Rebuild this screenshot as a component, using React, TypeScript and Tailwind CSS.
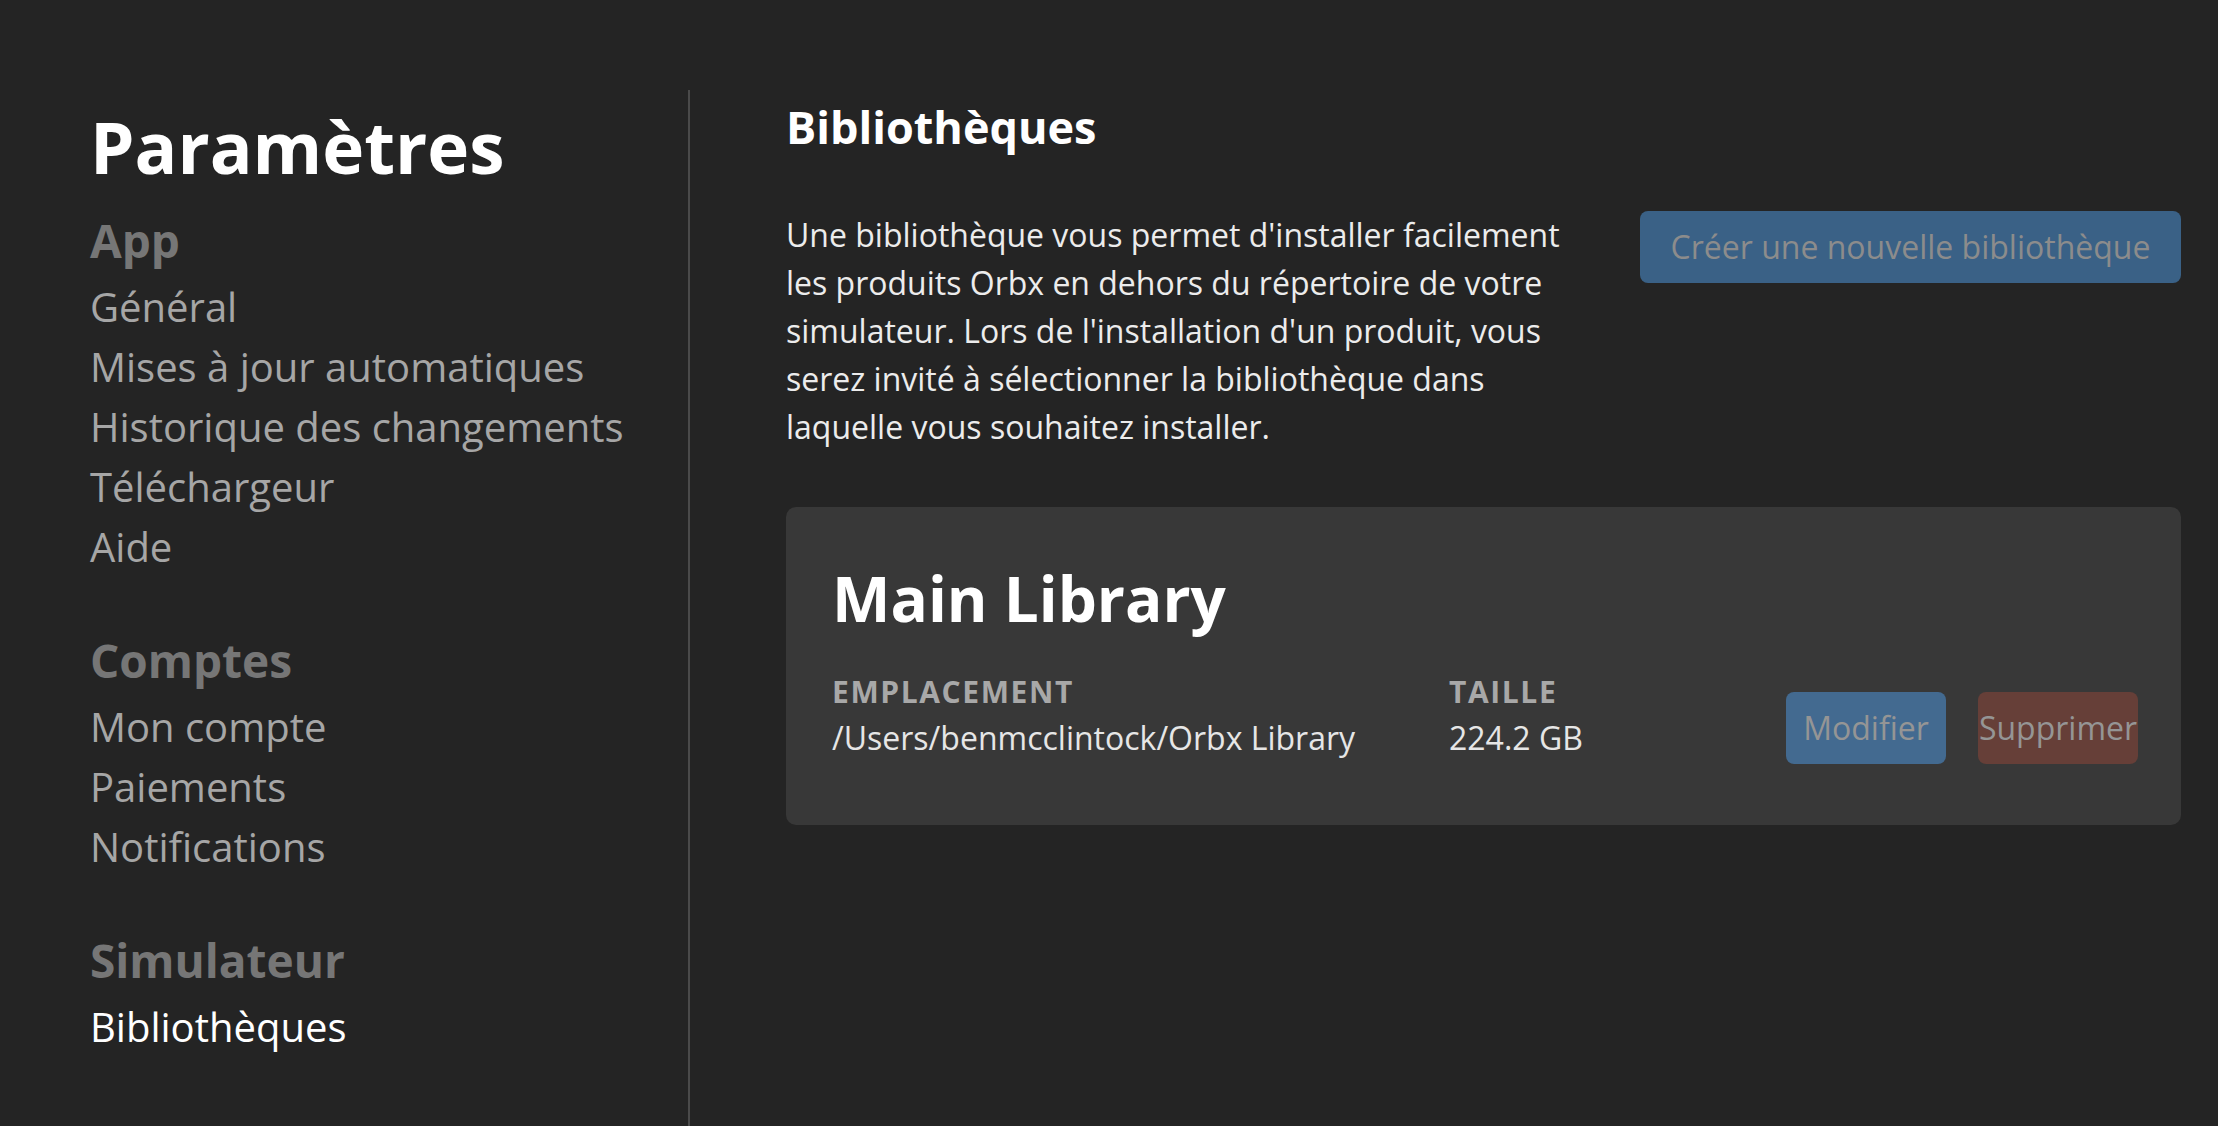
import React from "react";

const Section = ({ title, items, active, first }: { title: string; items: string[]; active?: string; first?: boolean }) => (
  <div className={first ? "mt-[33px]" : "mt-[59px]"}>
    <div className="text-[46px] leading-[48px] font-bold text-[#767676] mb-[13px]">{title}</div>
    {items.map((it) => (
      <div key={it} className={`text-[40px] leading-[60px] ${it === active ? "text-white" : "text-[#a6a6a6]"}`}>
        {it}
      </div>
    ))}
  </div>
);

export default function App() {
  return (
    <div
      className="min-h-screen w-full bg-[#242424] flex [font-variant-ligatures:none]"
      style={{ fontFamily: "'Open Sans', Lato, sans-serif" }}
    >
      <aside className="w-[688px] shrink-0 pl-[90px] pt-[111px]">
        <h1 className="text-[71px] leading-[72px] font-bold text-white">Paramètres</h1>
        <Section first title="App" items={["Général", "Mises à jour automatiques", "Historique des changements", "Téléchargeur", "Aide"]} />
        <Section title="Comptes" items={["Mon compte", "Paiements", "Notifications"]} />
        <Section title="Simulateur" items={["Bibliothèques"]} active="Bibliothèques" />
      </aside>
      <div className="w-[2px] shrink-0 bg-[#4a4a4a] mt-[90px]" />
      <main className="flex-1 pl-[96px] pr-[37px] pt-[105px]">
        <h2 className="text-[45px] leading-[44px] font-bold text-white">Bibliothèques</h2>
        <div className="flex items-start justify-between mt-[62px]">
          <p className="w-[800px] text-[32px] leading-[48px] text-[#ececec]">
            Une bibliothèque vous permet d'installer facilement les produits Orbx en dehors du répertoire de votre simulateur. Lors de l'installation d'un produit, vous serez invité à sélectionner la bibliothèque dans laquelle vous souhaitez installer.
          </p>
          <button className="h-[72px] w-[541px] rounded-[8px] bg-[#3a6186] text-[32px] text-[#8c8c8c] whitespace-nowrap">
            Créer une nouvelle bibliothèque
          </button>
        </div>
        <div className="mt-[56px] rounded-[10px] bg-[#383838] pl-[46px] pr-[43px] pt-[59px] pb-[61px]">
          <div className="text-[62px] leading-[64px] font-bold text-white">Main Library</div>
          <div className="flex items-end mt-[41px]">
            <div className="w-[617px] shrink-0">
              <div className="text-[30px] leading-[41px] font-bold uppercase tracking-[1.6px] text-[#a8a8a8]">Emplacement</div>
              <div className="text-[32px] leading-[52px] text-[#e6e6e6]">/Users/benmcclintock/Orbx Library</div>
            </div>
            <div className="flex-1">
              <div className="text-[30px] leading-[41px] font-bold uppercase tracking-[1.6px] text-[#a8a8a8]">Taille</div>
              <div className="text-[32px] leading-[52px] text-[#e6e6e6]">224.2 GB</div>
            </div>
            <div className="flex gap-[32px]">
              <button className="h-[72px] w-[160px] rounded-[8px] bg-[#436a90] text-[32px] text-[#959595] whitespace-nowrap flex items-center justify-center">
                Modifier
              </button>
              <button className="h-[72px] w-[160px] rounded-[8px] bg-[#663f38] text-[32px] text-[#959595] whitespace-nowrap flex items-center justify-center">
                Supprimer
              </button>
            </div>
          </div>
        </div>
      </main>
    </div>
  );
}
